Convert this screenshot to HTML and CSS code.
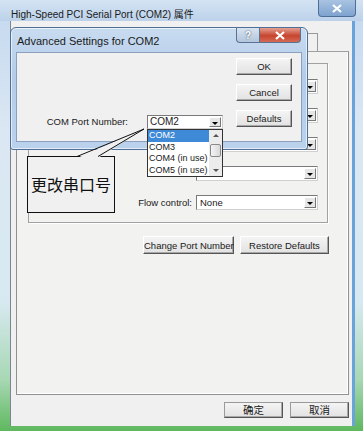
FILE: index.html
```html
<!DOCTYPE html>
<html lang="zh">
<head>
  <meta charset="UTF-8">
  <title>High-Speed PCI Serial Port (COM2) 属件</title>
  <link rel="stylesheet" href="styles.css">
</head>
<body>
  <div class="window">
    <!-- outer window title -->
    <div class="titlebar">
      <span class="title">High-Speed PCI Serial Port (COM2) 属件</span>
      <span class="close">
        <svg width="10" height="9" viewBox="0 0 10 9"><path d="M1 1 L9 8 M9 1 L1 8" stroke="#fff" stroke-width="2.2"/></svg>
      </span>
    </div>

    <div class="client">
      <div class="tabs">
        <span class="tab"></span>
        <span class="tab"></span>
        <span class="tab"></span>
        <span class="tab"></span>
      </div>

      <div class="page">
        <div class="group">
          <span class="label"></span><div class="combo"><span class="value"></span><span class="arrow"></span></div>
          <span class="label"></span><div class="combo"><span class="value"></span><span class="arrow"></span></div>
          <span class="label"></span><div class="combo"><span class="value"></span><span class="arrow"></span></div>
          <span class="label"></span><div class="combo"><span class="value"></span><span class="arrow"></span></div>
          <span class="label">Flow control:</span><div class="combo"><span class="value">None</span><span class="arrow"></span></div>
        </div>
        <div class="page-buttons">
          <button class="btn btn-change">Change Port Number</button>
          <button class="btn btn-restore">Restore Defaults</button>
        </div>
      </div>

      <div class="footer">
        <button class="btn btn-cn">确定</button>
        <button class="btn btn-cn">取消</button>
      </div>
    </div>

    <!-- Advanced Settings dialog over the property sheet -->
    <div class="dialog">
      <div class="dlg-title">
        <span class="dlg-caption">Advanced Settings for COM2</span>
        <span class="dlg-help">?</span>
        <span class="dlg-close">
          <svg width="10" height="9" viewBox="0 0 10 9"><path d="M1 1 L9 8 M9 1 L1 8" stroke="#fff" stroke-width="2.2"/></svg>
        </span>
      </div>
      <div class="dlg-client">
        <div class="dlg-left">
          <span class="dlg-label">COM Port Number:</span>
          <div class="combo combo-port">
            <span class="value">COM2</span><span class="arrow"></span>
            <div class="droplist">
              <div class="items">
                <div class="item selected">COM2</div>
                <div class="item">COM3</div>
                <div class="item">COM4 (in use)</div>
                <div class="item">COM5 (in use)</div>
              </div>
              <div class="scrollbar">
                <span class="sb-up"></span>
                <span class="sb-thumb"></span>
                <span class="sb-down"></span>
              </div>
            </div>
          </div>
        </div>
        <div class="dlg-buttons">
          <button class="btn">OK</button>
          <button class="btn">Cancel</button>
          <button class="btn">Defaults</button>
        </div>
      </div>
    </div>

    <!-- callout -->
    <div class="callout">更改串口号</div>
    <svg class="pointer" width="80" height="34" viewBox="0 0 80 34">
      <polygon points="7,33 74,4 28,33" fill="#f0f0f0"/>
      <path d="M7 31.5 L74 4 L28 31.5" fill="none" stroke="#111" stroke-width="1"/>
    </svg>
  </div>
</body>
</html>
```

FILE: styles.css
```css
body {
  margin: 0;
  font-family: "Liberation Sans", Arial, sans-serif;
  color: #1a1a1a;
}
.window {
  position: relative;
  width: 363px;
  height: 431px;
  overflow: hidden;
  display: flex;
  flex-direction: column;
  background: linear-gradient(#c3d8ef, #dbe7f3 30%, #d7e9f0 70%, #a8d8b4 88%, #5fb85f);
}
.titlebar {
  height: 21px;
  display: flex;
  align-items: flex-start;
  background: linear-gradient(#d4e3f3, #bcd2ea);
}
.title {
  flex: 1;
  padding: 9px 0 0 11px;
  font-size: 10px;
  line-height: 12px;
  font-family: "Liberation Sans", "Noto Sans CJK SC", sans-serif;
}
.close {
  width: 38px;
  height: 17px;
  margin-right: 7px;
  box-sizing: border-box;
  border: 1px solid #4f6e95;
  border-top: none;
  border-radius: 0 0 4px 4px;
  background: linear-gradient(#a9c3e2, #7ea3cf);
  display: flex;
  align-items: center;
  justify-content: center;
}
.client {
  margin: 0 0 5px 10px;
  width: 342px;
  flex: 1;
  box-sizing: border-box;
  background: #f0f0f0;
  border-left: 1px solid #7d8690;
  padding: 0 3px 0 5px;
  box-shadow: 3px 0 0 #6aa3da;
}
.tabs {
  margin-top: 12px;
  height: 18px;
  width: 302px;
  display: flex;
}
.tab {
  flex: 1;
  box-sizing: border-box;
  border: 1px solid #999;
  border-bottom: none;
  background: #f0f0f0;
}
.page {
  width: 333px;
  height: 344px;
  box-sizing: border-box;
  border: 1px solid #8f9193;
  border-top-color: #a0a0a0;
  background: #f2f2f0;
  box-shadow: inset -1px -1px 0 #fff;
  padding: 11px 0 0 11px;
}
.group {
  width: 300px;
  height: 160px;
  box-sizing: border-box;
  border: 1px solid #a2a2a2;
  box-shadow: 1px 1px 0 #fff;
  padding: 15px 9px 0 0;
  display: grid;
  grid-template-columns: 1fr 122px;
  grid-auto-rows: 15px;
  column-gap: 4px;
  row-gap: 14px;
}
.label {
  font-size: 9.5px;
  line-height: 15px;
  text-align: right;
  white-space: nowrap;
}
.combo {
  position: relative;
  display: flex;
  box-sizing: border-box;
  border: 1px solid #7a7a7a;
  border-right-color: #d0d0d0;
  border-bottom-color: #d0d0d0;
  background: #fff;
  height: 15px;
}
.combo .value {
  flex: 1;
  font-size: 9.5px;
  line-height: 13px;
  padding-left: 3px;
}
.combo .arrow {
  width: 12px;
  margin: 1px;
  background: #e6e6e6;
  border: 1px solid #fff;
  border-right-color: #777;
  border-bottom-color: #777;
  box-sizing: border-box;
  position: relative;
}
.combo .arrow::after {
  content: "";
  position: absolute;
  left: 2px;
  top: 4px;
  border-left: 3px solid transparent;
  border-right: 3px solid transparent;
  border-top: 3px solid #000;
}
.page-buttons {
  display: flex;
  justify-content: flex-end;
  gap: 6px;
  margin: 13px 19px 0 0;
}
.btn {
  font-family: "Liberation Sans", sans-serif;
  font-size: 9.5px;
  color: #1a1a1a;
  padding: 0;
  white-space: nowrap;
  box-sizing: border-box;
  border: 1px solid;
  border-color: #fff #555 #555 #fff;
  box-shadow: inset -1px -1px 0 #a8a8a8;
  background: linear-gradient(#f4f4f4, #e2e2e2);
}
.btn-change { width: 91px; height: 18px; }
.btn-restore { width: 89px; height: 18px; }
.footer {
  display: flex;
  justify-content: flex-end;
  gap: 7px;
  margin-top: 7px;
}
.btn-cn {
  width: 59px;
  height: 16px;
  font-family: "Noto Sans CJK SC", sans-serif;
  font-size: 10.5px;
  line-height: 12px;
  border-color: #9a9a9a #555 #555 #9a9a9a;
}

/* dialog */
.dialog {
  position: absolute;
  left: 10px;
  top: 27px;
  width: 298px;
  height: 123px;
  box-sizing: border-box;
  border: 1px solid #506f96;
  border-radius: 6px 6px 3px 3px;
  background: linear-gradient(#c8dbf0, #b4cce8 40%, #bad2ec);
  box-shadow: inset 0 0 0 1px rgba(255, 255, 255, 0.6);
  padding: 0 5px;
}
.dlg-title {
  height: 24px;
  display: flex;
  align-items: flex-start;
}
.dlg-caption {
  flex: 1;
  font-size: 11px;
  line-height: 13px;
  padding: 7px 0 0 1px;
}
.dlg-help,
.dlg-close {
  height: 15px;
  box-sizing: border-box;
  border: 1px solid #5a7394;
  border-top: none;
  display: flex;
  align-items: center;
  justify-content: center;
}
.dlg-help {
  width: 23px;
  border-right: none;
  border-radius: 0 0 0 4px;
  background: linear-gradient(#d8e3ef, #b3c6dc);
  font-weight: bold;
  font-size: 10px;
  color: #fff;
  text-shadow: 0 0 2px #2c3e55;
}
.dlg-close {
  width: 42px;
  margin-right: 1px;
  border-radius: 0 0 4px 0;
  background: linear-gradient(#e5a092, #c7452f 55%, #d46a55);
}
.dlg-client {
  height: 90px;
  box-sizing: border-box;
  background: #f0f0f0;
  border: 1px solid #8aa0bc;
  display: flex;
  padding: 5px 9px 0 0;
}
.dlg-left {
  flex: 1;
  display: flex;
  justify-content: flex-end;
  align-items: flex-end;
  gap: 19px;
  margin-right: 13px;
  padding-bottom: 12px;
}
.dlg-label {
  font-size: 9.5px;
  line-height: 14px;
  white-space: nowrap;
}
.combo-port {
  width: 76px;
  height: 14px;
}
.combo-port .value {
  font-size: 10px;
  line-height: 12px;
  padding-left: 2px;
}
.dlg-buttons {
  display: flex;
  flex-direction: column;
  gap: 9px;
}
.dlg-buttons .btn {
  width: 56px;
  height: 17px;
}
.droplist {
  position: absolute;
  left: -1px;
  top: 13px;
  width: 76px;
  height: 48px;
  box-sizing: border-box;
  border: 1px solid #333;
  background: #fff;
  display: flex;
  z-index: 2;
}
.items {
  flex: 1;
  overflow: hidden;
}
.item {
  height: 11.5px;
  font-size: 9px;
  line-height: 11.5px;
  padding-left: 1px;
  white-space: nowrap;
}
.item.selected {
  background: #3f8ad6;
  color: #fff;
}
.scrollbar {
  width: 13px;
  background: #ececec;
  display: flex;
  flex-direction: column;
}
.sb-up,
.sb-down {
  height: 11px;
  position: relative;
}
.sb-up::after,
.sb-down::after {
  content: "";
  position: absolute;
  left: 4px;
  top: 4px;
  border-left: 3px solid transparent;
  border-right: 3px solid transparent;
}
.sb-up::after { border-bottom: 3px solid #555; }
.sb-down::after { border-top: 3px solid #555; }
.sb-thumb {
  height: 13px;
  margin: 3px 1px 0;
  box-sizing: border-box;
  border: 1px solid #8a8a8a;
  border-radius: 2px;
  background: linear-gradient(90deg, #f4f4f4, #d9d9d9);
}
.sb-down { margin-top: auto; }

/* callout */
.callout {
  position: absolute;
  left: 27px;
  top: 156px;
  width: 88px;
  height: 57px;
  box-sizing: border-box;
  border: 1px solid #111;
  background: #f0f0f0;
  font-family: "Noto Sans CJK SC", sans-serif;
  font-size: 16px;
  line-height: 55px;
  text-align: center;
  color: #111;
}
.pointer {
  position: absolute;
  left: 70px;
  top: 125px;
}
```
